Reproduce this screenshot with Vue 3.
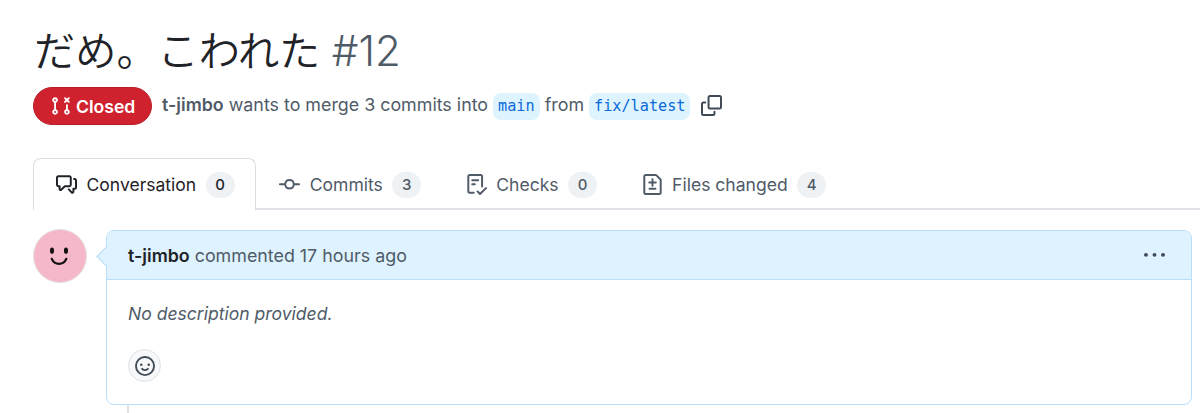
<script setup>
const tabs = [
  { label: 'Conversation', count: 0, active: true, d: 'M1.75 1h8.5c.966 0 1.75.784 1.75 1.75v5.5A1.75 1.75 0 0 1 10.25 10H7.061l-2.574 2.573A1.458 1.458 0 0 1 2 11.543V10h-.25A1.75 1.75 0 0 1 0 8.25v-5.5C0 1.784.784 1 1.75 1ZM1.5 2.75v5.5c0 .138.112.25.25.25h1a.75.75 0 0 1 .75.75v2.19l2.72-2.72a.749.749 0 0 1 .53-.22h3.5a.25.25 0 0 0 .25-.25v-5.5a.25.25 0 0 0-.25-.25h-8.5a.25.25 0 0 0-.25.25Zm13 2a.25.25 0 0 0-.25-.25h-.5a.75.75 0 0 1 0-1.5h.5c.966 0 1.75.784 1.75 1.75v5.5A1.75 1.75 0 0 1 14.25 12H14v1.543a1.458 1.458 0 0 1-2.487 1.03L9.22 12.28a.749.749 0 0 1 .326-1.275.749.749 0 0 1 .734.215l2.22 2.22v-2.19a.75.75 0 0 1 .75-.75h1a.25.25 0 0 0 .25-.25Z' },
  { label: 'Commits', count: 3, d: 'M11.93 8.5a4.002 4.002 0 0 1-7.86 0H.75a.75.75 0 0 1 0-1.5h3.32a4.002 4.002 0 0 1 7.86 0h3.32a.75.75 0 0 1 0 1.5Zm-1.43-.75a2.5 2.5 0 1 0-5 0 2.5 2.5 0 0 0 5 0Z' },
  { label: 'Checks', count: 0, d: 'M2.5 1.75v11.5c0 .138.112.25.25.25h3.17a.75.75 0 0 1 0 1.5H2.75A1.75 1.75 0 0 1 1 13.25V1.75C1 .784 1.784 0 2.75 0h8.5C12.216 0 13 .784 13 1.75v7.736a.75.75 0 0 1-1.5 0V1.75a.25.25 0 0 0-.25-.25h-8.5a.25.25 0 0 0-.25.25Zm13.274 9.537v-.001l-4.557 4.45a.75.75 0 0 1-1.055-.008l-1.943-1.95a.75.75 0 0 1 1.062-1.058l1.419 1.425 4.026-3.932a.75.75 0 1 1 1.048 1.074ZM4.75 4h4.5a.75.75 0 0 1 0 1.5h-4.5a.75.75 0 0 1 0-1.5ZM4 7.75A.75.75 0 0 1 4.75 7h2a.75.75 0 0 1 0 1.5h-2A.75.75 0 0 1 4 7.75Z' },
  { label: 'Files changed', count: 4, d: 'M1 1.75C1 .784 1.784 0 2.75 0h7.586c.464 0 .909.184 1.237.513l2.914 2.914c.329.328.513.773.513 1.237v9.586A1.75 1.75 0 0 1 13.25 16H2.75A1.75 1.75 0 0 1 1 14.25Zm1.75-.25a.25.25 0 0 0-.25.25v12.5c0 .138.112.25.25.25h10.5a.25.25 0 0 0 .25-.25V4.664a.25.25 0 0 0-.073-.177l-2.914-2.914a.25.25 0 0 0-.177-.073ZM8 3.25a.75.75 0 0 1 .75.75v1.75h1.75a.75.75 0 0 1 0 1.5H8.75V9a.75.75 0 0 1-1.5 0V7.25H5.5a.75.75 0 0 1 0-1.5h1.75V4A.75.75 0 0 1 8 3.25Zm-3 8a.75.75 0 0 1 .75-.75h4.5a.75.75 0 0 1 0 1.5h-4.5a.75.75 0 0 1-.75-.75Z' },
]
</script>

<template>
  <main class="page">
    <h1 class="title">だめ。こわれた <span class="num">#12</span></h1>
    <div class="meta">
      <span class="state">
        <svg class="state-icon" viewBox="0 0 16 16"><path d="M3.25 1A2.25 2.25 0 0 1 4 5.372v5.256a2.251 2.251 0 1 1-1.5 0V5.372A2.251 2.251 0 0 1 3.25 1Zm9.5 5.5a.75.75 0 0 1 .75.75v3.378a2.251 2.251 0 1 1-1.5 0V7.25a.75.75 0 0 1 .75-.75Zm-2.03-5.273a.75.75 0 0 1 1.06 0l.97.97.97-.97a.748.748 0 0 1 1.265.332.75.75 0 0 1-.205.729l-.97.97.97.97a.751.751 0 0 1-.018 1.042.751.751 0 0 1-1.042.018l-.97-.97-.97.97a.749.749 0 0 1-1.275-.326.749.749 0 0 1 .215-.734l.97-.97-.97-.97a.75.75 0 0 1 0-1.06ZM2.5 3.25a.75.75 0 1 0 1.5 0 .75.75 0 0 0-1.5 0ZM3.25 12a.75.75 0 1 0 0 1.5.75.75 0 0 0 0-1.5Zm9.5 0a.75.75 0 1 0 0 1.5.75.75 0 0 0 0-1.5Z"/></svg>
        Closed
      </span>
      <span class="summary"><b>t-jimbo</b> wants to merge 3 commits into <code>main</code> from <code>fix/latest</code></span>
      <svg class="copy" viewBox="0 0 16 16"><path d="M0 6.75C0 5.784.784 5 1.75 5h1.5a.75.75 0 0 1 0 1.5h-1.5a.25.25 0 0 0-.25.25v7.5c0 .138.112.25.25.25h7.5a.25.25 0 0 0 .25-.25v-1.5a.75.75 0 0 1 1.5 0v1.5A1.75 1.75 0 0 1 9.25 16h-7.5A1.75 1.75 0 0 1 0 14.25Z"/><path d="M5 1.75C5 .784 5.784 0 6.75 0h7.5C15.216 0 16 .784 16 1.75v7.5A1.75 1.75 0 0 1 14.25 11h-7.5A1.75 1.75 0 0 1 5 9.25Zm1.75-.25a.25.25 0 0 0-.25.25v7.5c0 .138.112.25.25.25h7.5a.25.25 0 0 0 .25-.25v-7.5a.25.25 0 0 0-.25-.25Z"/></svg>
    </div>
    <nav class="tabs">
      <a v-for="t in tabs" :key="t.label" class="tab" :class="{ active: t.active }">
        <svg class="tab-icon" viewBox="0 0 16 16"><path :d="t.d"/></svg>
        <span class="tab-label">{{ t.label }}</span>
        <span class="counter">{{ t.count }}</span>
      </a>
    </nav>
    <section class="thread">
      <div class="avatar">
        <svg viewBox="0 0 54 54" class="face"><ellipse cx="18.7" cy="21.5" rx="2.1" ry="3.2"/><ellipse cx="33.2" cy="21.5" rx="2.1" ry="3.2"/><path d="M18.5 30c1.500 3.500 4.500 5.200 7.500 5.200s6-1.700 7.500-5.200"/></svg>
      </div>
      <div class="comment-col">
        <article class="comment">
          <span class="caret"></span>
          <header class="comment-head">
            <span><b>t-jimbo</b> commented 17 hours ago</span>
            <svg class="kebab" viewBox="0 0 16 16"><path d="M8 9a1.500 1.500 0 1 0 0-3 1.500 1.500 0 0 0 0 3ZM1.500 9a1.500 1.500 0 1 0 0-3 1.500 1.500 0 0 0 0 3Zm13 0a1.500 1.500 0 1 0 0-3 1.500 1.500 0 0 0 0 3Z"/></svg>
          </header>
          <div class="comment-body">
            <em>No description provided.</em>
            <button class="react">
              <svg viewBox="0 0 16 16"><path d="M8 0a8 8 0 1 1 0 16A8 8 0 0 1 8 0ZM1.500 8a6.500 6.500 0 1 0 13 0 6.500 6.500 0 0 0-13 0Zm3.820 1.636a.75.75 0 0 1 1.038.175l.007.009c.103.118.22.222.35.31.264.178.683.37 1.285.37.602 0 1.020-.192 1.285-.371.13-.088.247-.192.35-.31l.007-.008a.75.75 0 0 1 1.222.87l-.022-.015c.02.013.021.015.021.015v.001l-.001.002-.002.003-.005.007-.014.019a2.066 2.066 0 0 1-.184.213c-.16.166-.338.316-.53.445-.63.418-1.370.638-2.127.629-.946 0-1.652-.308-2.126-.63a3.331 3.331 0 0 1-.715-.657l-.014-.02-.005-.006-.002-.003v-.002h-.001l.613-.432-.614.43a.75.75 0 0 1 .183-1.044ZM12 7a1 1 0 1 1-2 0 1 1 0 0 1 2 0ZM5 8a1 1 0 1 1 0-2 1 1 0 0 1 0 2Zm5.250 2.250.592.416a97.710 97.710 0 0 0-.592-.416Z"/></svg>
            </button>
          </div>
        </article>
        <div class="timeline"></div>
      </div>
    </section>
  </main>
</template>

<style>
html, body { margin: 0; background: #fff; }
</style>

<style scoped>
.page {
  box-sizing: border-box;
  width: 1200px;
  height: 413px;
  overflow: hidden;
  padding: 23px 0 0 33px;
  font-family: Inter, "Noto Sans CJK JP", sans-serif;
  font-size: 17.85px;
  color: #1f2328;
}
.title {
  margin: 0 0 0 1px;
  height: 56px;
  line-height: 56px;
  font-size: 41.2px;
  font-weight: 350;
  font-family: Inter, "Noto Sans CJK JP", sans-serif;
  color: #1f2328;
}
.num { color: #505b68; font-weight: 300; font-size: 42px; }
.meta {
  display: flex;
  align-items: center;
  height: 38px;
  margin-top: 8px;
}
.state {
  display: flex;
  align-items: center;
  gap: 5px;
  box-sizing: border-box;
  width: 119px;
  height: 38px;
  padding-left: 17px;
  border: 1px solid #b8202b;
  border-radius: 19px;
  background: #cf222e;
  color: #fff;
  font-weight: 600;
  font-size: 17.6px;
}
.state-icon { width: 20px; height: 20px; fill: #fff; }
.summary { margin-left: 10px; color: #505b68; white-space: nowrap; }
.summary b { font-weight: 600; }
code {
  display: inline-block;
  font-family: "DejaVu Sans Mono", monospace;
  font-size: 15.2px;
  line-height: 27px;
  padding: 0 5px;
  border-radius: 8px;
  background: #ddf4ff;
  color: #0969da;
}
.copy { width: 21px; height: 21px; margin: 0 0 2px 11px; fill: #3f4a55; }
.tabs {
  display: flex;
  height: 50px;
  margin-top: 33px;
  border-bottom: 2px solid #e1e5ea;
  font-size: 17.55px;
}
.tab {
  display: flex;
  align-items: center;
  box-sizing: border-box;
  height: 52px;
  padding: 0 20.5px 0 22px;
  border: 1px solid transparent;
  border-bottom: 0;
  color: #505b68;
}
.tab.active {
  color: #1f2328;
  background: #fff;
  border-color: #d8dee4;
  border-radius: 8px 8px 0 0;
}
.tab-icon { width: 21px; height: 21px; fill: currentColor; }
.tab-label { margin-left: 9.5px; }
.counter {
  display: flex;
  align-items: center;
  justify-content: center;
  width: 29px;
  height: 26px;
  margin-left: 9.5px;
  border-radius: 13px;
  background: #eff2f5;
  color: #505b68;
  font-size: 15px;
  font-weight: 500;
}
.tab.active .counter { color: #1f2328; }
.thread {
  display: flex;
  margin-top: 19px;
}
.avatar {
  box-sizing: border-box;
  flex: none;
  width: 54px;
  height: 54px;
  border-radius: 50%;
  background: #f5b8c8;
  border: 1px solid #e4dfe0;
}
.face { display: block; width: 52px; height: 52px; fill: #111; }
.face path { fill: none; stroke: #111; stroke-width: 2.4; stroke-linecap: round; }
.comment-col { flex: none; width: 1086px; margin-left: 19px; margin-top: 1px; }
.comment {
  position: relative;
  box-sizing: border-box;
  height: 175px;
  border: 1px solid #b8defb;
  border-radius: 8px;
}
.caret {
  position: absolute;
  left: -8px;
  top: 19px;
  width: 13px;
  height: 13px;
  background: #def3ff;
  border-left: 1px solid #b8defb;
  border-bottom: 1px solid #b8defb;
  box-sizing: border-box;
  transform: rotate(45deg);
}
.comment-head {
  display: flex;
  align-items: center;
  justify-content: space-between;
  box-sizing: border-box;
  height: 49px;
  padding: 0 26px 0 21px;
  background: #def3ff;
  border-bottom: 1px solid #b8defb;
  border-radius: 7px 7px 0 0;
  color: #505b68;
}
.comment-head b { font-weight: 600; color: #1f2328; }
.kebab { width: 21px; height: 21px; fill: #3f4a55; }
.comment-body { padding: 23px 21px 0; color: #505b68; font-size: 17.55px; }
.comment-body em { display: block; line-height: 22px; }
.react {
  display: flex;
  align-items: center;
  justify-content: center;
  width: 33px;
  height: 33px;
  margin-top: 24px;
  padding: 0;
  border: 1px solid #dde2e8;
  border-radius: 50%;
  background: #f6f8fa;
}
.react svg { width: 20px; height: 20px; fill: #3f4a55; }
.timeline { width: 2px; height: 12px; margin-left: 21px; background: #dde2e8; }
</style>
